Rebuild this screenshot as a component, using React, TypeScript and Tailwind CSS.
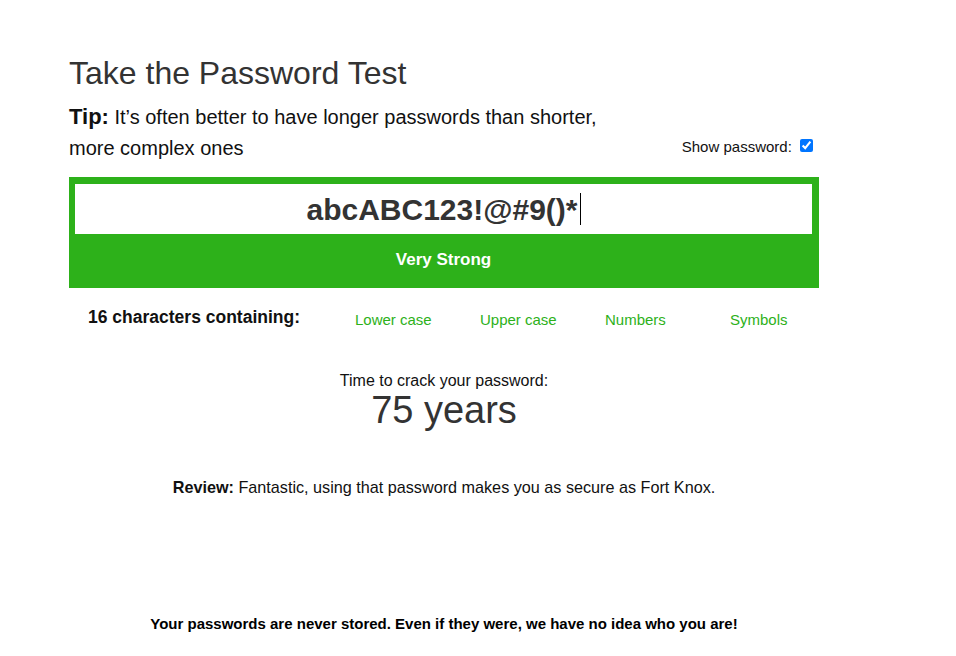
import { useState } from "react";

const checks = ["Lower case", "Upper case", "Numbers", "Symbols"];

export default function App() {
  const [show, setShow] = useState(true);
  const password = "abcABC123!@#9()*";

  return (
    <div
      className="min-h-screen bg-white pl-[69px] pt-[55px]"
      style={{ fontFamily: '"Liberation Sans", Arial, sans-serif' }}
    >
      <div className="w-[750px]">
        <h1 className="text-[32px] leading-[36px] font-normal text-[#333]">
          Take the Password Test
        </h1>

        <div className="mt-[10px] flex justify-between">
          <p className="w-[540px] text-[20px] leading-[31px] text-[#111]">
            <span className="text-[22px] font-bold">Tip:</span> It’s often better to have longer
            passwords than shorter, more complex ones
          </p>
          <label className="mb-[6px] mr-[6px] self-end text-[15px] text-[#111]">
            Show password:{" "}
            <input
              type="checkbox"
              checked={show}
              onChange={(e) => setShow(e.target.checked)}
              className="ml-[4px]"
            />
          </label>
        </div>

        {/* strength meter */}
        <div className="mt-[13px] bg-[#2db11a] pl-[6px] pr-[7px] pt-[7px]">
          <div className="flex h-[50px] items-center justify-center bg-white text-[30px] font-bold text-[#333]">
            <span>{show ? password : "•".repeat(password.length)}</span>
            <span className="ml-[2px] inline-block h-[32px] w-px bg-black" />
          </div>
          <div className="flex h-[54px] items-center justify-center pb-[2px] text-[17px] font-bold text-white">
            Very Strong
          </div>
        </div>

        <div className="mt-[16px] flex items-start">
          <div className="w-[286px] shrink-0 pl-[19px] text-[17.5px] font-bold text-[#111]">
            {password.length} characters containing:
          </div>
          {checks.map((c) => (
            <div key={c} className="w-[125px] shrink-0 pt-[5px] text-[15px] text-[#2db11a]">
              {c}
            </div>
          ))}
        </div>

        <div className="mt-[37px] text-center">
          <div className="text-[16px] text-[#111]">Time to crack your password:</div>
          <div className="text-[38px] leading-[34px] text-[#333]">75 years</div>
        </div>

        <p className="mt-[48px] text-center text-[16.2px] text-[#111]">
          <span className="font-bold">Review:</span> Fantastic, using that password makes you as
          secure as Fort Knox.
        </p>

        <p className="mt-[114px] text-center text-[15px] font-bold text-black">
          Your passwords are never stored. Even if they were, we have no idea who you are!
        </p>
      </div>
    </div>
  );
}
